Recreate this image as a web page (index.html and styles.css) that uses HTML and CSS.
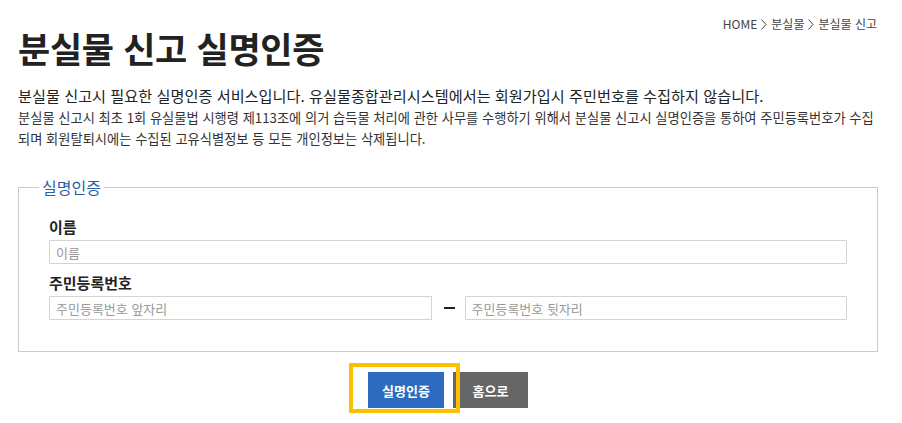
FILE: index.html
```html
<!DOCTYPE HTML>
<html lang="ko">
<head>
    <meta charset="utf-8"/>
    <title>분실물 신고 실명인증</title>
    <link rel="stylesheet" href="styles.css">
</head>
<body>
<div id="container">

    <div class="head">
        <h1 class="title">분실물 신고 실명인증</h1>
        <div class="location">
            HOME
            <svg class="arr" width="6" height="11" viewBox="0 0 6 11"><polyline points="0.5,0.5 5,5.5 0.5,10.5" fill="none" stroke="#444" stroke-width="1"/></svg>
            분실물
            <svg class="arr" width="6" height="11" viewBox="0 0 6 11"><polyline points="0.5,0.5 5,5.5 0.5,10.5" fill="none" stroke="#444" stroke-width="1"/></svg>
            분실물 신고
        </div>
    </div>

    <p class="lead">분실물 신고시 필요한 실명인증 서비스입니다. 유실물종합관리시스템에서는 회원가입시 주민번호를 수집하지 않습니다.</p>
    <p class="notice">분실물 신고시 최초 1회 유실물법 시행령 제113조에 의거 습득물 처리에 관한 사무를 수행하기 위해서 분실물 신고시 실명인증을 통하여 주민등록번호가 수집되며 회원탈퇴시에는 수집된 고유식별정보 등 모든 개인정보는 삭제됩니다.</p>

    <fieldset class="auth">
        <legend>실명인증</legend>

        <div class="field">
            <label for="name">이름</label>
            <input type="text" id="name" placeholder="이름"/>
        </div>

        <div class="field">
            <label for="jumin1">주민등록번호</label>
            <div class="jumin">
                <input type="text" id="jumin1" placeholder="주민등록번호 앞자리"/>
                <span class="dash"></span>
                <input type="password" id="jumin2" placeholder="주민등록번호 뒷자리"/>
            </div>
        </div>
    </fieldset>

    <div class="btns">
        <span class="focus"><button type="button" class="btn btn-blue">실명인증</button></span>
        <button type="button" class="btn btn-gray">홈으로</button>
    </div>

</div>
</body>
</html>
```

FILE: styles.css
```css
body, html{
    margin:0px; padding:0px;
    font-family:"Malgun Gothic","Noto Sans CJK KR","Noto Sans",sans-serif;
    color:#333;
    background:#fff;
}
#container{
    width:860px;
    margin:0 0 0 18px;
    padding:16px 0 15px 0;
}
.head{
    display:flex;
    justify-content:space-between;
    align-items:flex-start;
}
.title{
    margin:12px 0 0 0;
    font-size:35px;
    line-height:40px;
    font-weight:bold;
    color:#222;
    letter-spacing:-0.3px;
}
.location{
    font-size:12px;
    line-height:16px;
    color:#444;
    display:flex;
    align-items:center;
    gap:4px;
    margin-right:1px;
}
.lead{
    margin:16px 0 0 0;
    font-size:15.2px;
    line-height:22px;
    color:#222;
}
.notice{
    margin:1px 0 0 0;
    font-size:13.25px;
    line-height:21px;
    color:#333;
}
.auth{
    margin:28px 0 0 0;
    padding:20px 30px 31px 30px;
    border:1px solid #ccc;
    min-width:0;
}
.auth legend{
    margin-left:-10px;
    padding:0 3px;
    font-size:16px;
    line-height:20px;
    color:#2a5ea8;
}
.field + .field{
    margin-top:9px;
}
.field label{
    display:block;
    font-size:15px;
    font-weight:bold;
    line-height:20px;
    color:#222;
    margin-bottom:3px;
}
.field input{
    display:block;
    box-sizing:border-box;
    width:100%;
    height:24px;
    margin:0;
    padding:0 6px;
    border:1px solid #d4d4d4;
    font-family:inherit;
    font-size:13px;
    color:#333;
}
.field input::placeholder{
    color:#999;
}
.jumin{
    display:flex;
    align-items:center;
}
.jumin input{
    flex:1;
    width:auto;
    min-width:0;
}
.dash{
    width:33px;
    display:flex;
    justify-content:center;
}
.dash::before{
    content:"";
    width:11px;
    height:2px;
    margin-left:3px;
    background:#222;
}
.btns{
    display:flex;
    justify-content:center;
    gap:9px;
    margin-top:20px;
}
.focus{
    position:relative;
    display:block;
}
.focus::after{
    content:"";
    position:absolute;
    top:-9px; left:-19px; right:-16px; bottom:-5px;
    border:4px solid #fbc000;
    pointer-events:none;
    z-index:1;
}
.btn{
    display:block;
    height:36px;
    border:0;
    margin:0;
    padding:0;
    font-family:inherit;
    font-size:13px;
    font-weight:bold;
    color:#fff;
}
.btn-blue{
    width:76px;
    background:#2d6bc0;
}
.btn-gray{
    width:75px;
    background:#666;
}
```
